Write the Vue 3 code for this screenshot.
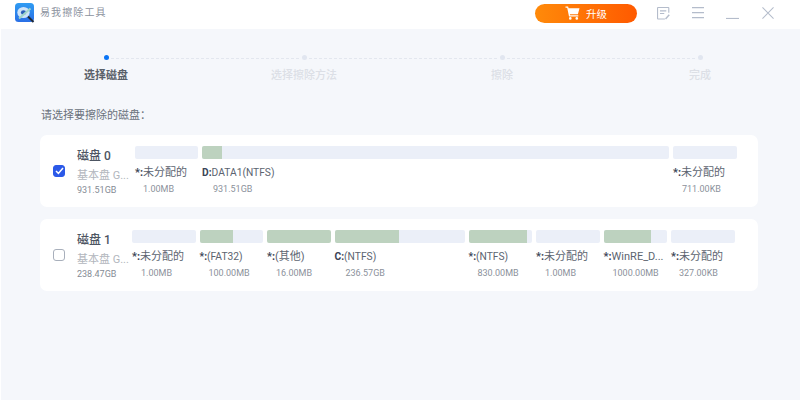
<script setup>
const steps = [
  { label: '选择磁盘', active: true },
  { label: '选择擦除方法' },
  { label: '擦除' },
  { label: '完成' }
]
const disks = [
  {
    name: '磁盘 0', kind: '基本盘 G...', size: '931.51GB', checked: true, indent: 3,
    parts: [
      { w: 63, used: 0, drive: '*:', name: '未分配的', size: '1.00MB', inset: 8 },
      { w: 467, used: 20, drive: 'D:', name: 'DATA1(NTFS)', size: '931.51GB', inset: 11, small: true },
      { w: 64, used: 0, drive: '*:', name: '未分配的', size: '711.00KB', inset: 9 }
    ]
  },
  {
    name: '磁盘 1', kind: '基本盘 G...', size: '238.47GB', checked: false, indent: 0,
    parts: [
      { w: 63.5, used: 0, drive: '*:', name: '未分配的', size: '1.00MB', inset: 9 },
      { w: 63.5, used: 33, drive: '*:', name: '(FAT32)', size: '100.00MB', inset: 9, small: true },
      { w: 63.5, used: 63.5, drive: '*:', name: '(其他)', size: '16.00MB', inset: 9 },
      { w: 130, used: 64, drive: 'C:', name: '(NTFS)', size: '236.57GB', inset: 11, small: true },
      { w: 63.5, used: 58, drive: '*:', name: '(NTFS)', size: '830.00MB', inset: 9, small: true },
      { w: 63.5, used: 0, drive: '*:', name: '未分配的', size: '1.00MB', inset: 9 },
      { w: 63.5, used: 47, drive: '*:', name: 'WinRE_D...', size: '1000.00MB', inset: 9 },
      { w: 63.5, used: 0, drive: '*:', name: '未分配的', size: '327.00KB', inset: 8 }
    ]
  }
]
</script>

<template>
  <div class="app">
    <header class="titlebar">
      <div class="brand">
        <svg class="logo" width="20" height="20" viewBox="0 0 20 20">
          <defs>
            <linearGradient id="lg" x1="0" y1="0" x2="0" y2="1">
              <stop offset="0" stop-color="#2f9cf2" />
              <stop offset="1" stop-color="#2a6fe6" />
            </linearGradient>
          </defs>
          <rect x="0" y="0" width="19" height="19" rx="3.5" fill="url(#lg)" />
          <ellipse cx="8.5" cy="9.5" rx="6.2" ry="5.6" fill="#cfe4f8" />
          <ellipse cx="8.5" cy="9.5" rx="2.6" ry="2.2" fill="#2a5fb8" />
          <path d="M4 15.5 L15.5 5.5" stroke="#9fd6c8" stroke-width="2" />
          <path d="M13 13.5 L18.5 19" stroke="#1f2a3a" stroke-width="2" />
        </svg>
        <span class="appname">易我擦除工具</span>
      </div>
      <div class="actions">
        <button class="upgrade" type="button">
          <svg width="15" height="14" viewBox="0 0 15 14" fill="#fff">
            <path d="M0.5 0.5h2.6l0.5 1.8h10.9l-1.6 6H4.9l0.2 1h8.2v1.2H4L2.2 1.7H0.5z" />
            <circle cx="5.3" cy="12.4" r="1.3" />
            <circle cx="11.8" cy="12.4" r="1.3" />
          </svg>
          <span>升级</span>
        </button>
        <svg class="icon note" width="13" height="13" viewBox="0 0 14 14" fill="none" stroke="#b4bccb" stroke-width="1.2">
          <path d="M8.5 12.9H1.2a.6.6 0 0 1-.6-.6V1.2a.6.6 0 0 1 .6-.6h10.9a.6.6 0 0 1 .6.6v5" />
          <path d="M3.2 4.2h6.8M3.2 7h4.6" />
          <path d="M9.2 12.8l4-4.4" stroke-width="1.6" />
        </svg>
        <svg class="icon menu" width="12" height="12" viewBox="0 0 12 12" stroke="#b4bccb" stroke-width="1.2">
          <path d="M0 .6h12M0 5.6h12M0 10.6h12" />
        </svg>
        <svg class="icon min" width="13" height="12" viewBox="0 0 13 12" stroke="#b4bccb" stroke-width="1.2">
          <path d="M0 11.5h13" />
        </svg>
        <svg class="icon close" width="12" height="12" viewBox="0 0 13 13" stroke="#b4bccb" stroke-width="1.1">
          <path d="M.5.5l12 12M12.5.5l-12 12" />
        </svg>
      </div>
    </header>

    <main class="body">
      <ol class="steps">
        <li v-for="s in steps" :key="s.label" class="step" :class="{ active: s.active }">
          <span class="dot"></span>
          <span class="step-label">{{ s.label }}</span>
        </li>
      </ol>

      <p class="prompt">请选择要擦除的磁盘：</p>

      <section v-for="d in disks" :key="d.name" class="card">
        <span class="check" :class="{ checked: d.checked }">
          <svg v-if="d.checked" width="9" height="8" viewBox="0 0 9 8" fill="none" stroke="#fff" stroke-width="1.5">
            <path d="M1 4l2.4 2.4L8 1" />
          </svg>
        </span>
        <div class="disk-info">
          <div class="disk-name">{{ d.name }}</div>
          <div class="disk-kind">{{ d.kind }}</div>
          <div class="disk-size">{{ d.size }}</div>
        </div>
        <div class="parts" :style="{ paddingLeft: d.indent + 'px' }">
          <div v-for="(p, i) in d.parts" :key="i" class="part" :style="{ width: p.w + 'px' }">
            <div class="bar"><div class="used" :style="{ width: p.used + 'px' }"></div></div>
            <div class="legend">
              <div class="legend-name" :class="{ small: p.small }"><b>{{ p.drive }}</b>{{ p.name }}</div>
              <div class="legend-size" :style="{ paddingLeft: p.inset + 'px' }">{{ p.size }}</div>
            </div>
          </div>
        </div>
      </section>
    </main>
  </div>
</template>

<style>
html, body { margin: 0; background: #f5f7fb; }
</style>

<style scoped>
.app {
  width: 800px;
  height: 400px;
  overflow: hidden;
  background: #f5f7fb;
  font-family: Roboto, "Noto Sans CJK SC", sans-serif;
  display: flex;
  flex-direction: column;
}
.titlebar {
  height: 29px;
  flex: none;
  background: #fff;
  display: flex;
  align-items: center;
  justify-content: space-between;
}
.brand {
  display: flex;
  align-items: center;
  padding: 0 0 3px 15px;
  gap: 5px;
}
.logo { display: block; }
.appname {
  font-size: 10px;
  letter-spacing: 1.1px;
  color: #8c929e;
  line-height: 14px;
}
.actions {
  display: flex;
  align-items: center;
  padding-bottom: 3px;
}
.upgrade {
  width: 102px;
  height: 19px;
  padding: 0;
  border: 0;
  border-radius: 10px;
  background: linear-gradient(90deg, #ff8a0a, #ff5a00);
  color: #fff;
  font: inherit;
  font-size: 10.5px;
  display: flex;
  align-items: center;
  justify-content: center;
  gap: 6px;
  margin-right: 20px;
}
.icon { display: block; flex: none; }
.note { margin-right: 22px; }
.menu { margin-right: 22px; }
.min { margin-right: 23px; }
.close { margin-right: 26px; }

.body {
  flex: 1;
  border-left: 1px solid #fff;
}
.steps {
  list-style: none;
  margin: 0;
  padding: 26px 0 0 6px;
  display: grid;
  grid-template-columns: repeat(4, 198px);
}
.step {
  position: relative;
  display: flex;
  flex-direction: column;
  align-items: center;
  gap: 8px;
}
.step:not(:last-child)::after {
  content: "";
  position: absolute;
  left: calc(50% + 5px);
  width: 188px;
  top: 3px;
  border-top: 1px dashed #e3e7ef;
}
.dot {
  width: 5px;
  height: 5px;
  border-radius: 50%;
  background: #e1e6f0;
}
.active .dot { background: #0a74f5; }
.step-label {
  font-size: 11px;
  line-height: 16px;
  color: #dcdfe6;
  font-weight: 500;
}
.active .step-label { color: #5a6069; font-weight: 700; }
.prompt {
  margin: 24px 0 11px 40px;
  font-size: 11px;
  line-height: 16px;
  color: #6a717c;
}
.card {
  width: 718px;
  height: 72px;
  margin: 0 0 12px 39px;
  box-sizing: border-box;
  background: #fff;
  border-radius: 7px;
  display: flex;
  align-items: flex-start;
  padding-top: 11px;
}
.check {
  flex: none;
  box-sizing: border-box;
  width: 12px;
  height: 12px;
  margin: 19px 0 0 13px;
  border: 1px solid #a8afbb;
  border-radius: 3px;
  background: #fff;
  display: flex;
  align-items: center;
  justify-content: center;
}
.check.checked {
  background: #2b59e8;
  border-color: #2b59e8;
}
.disk-info {
  flex: none;
  width: 55px;
  margin-left: 12px;
}
.disk-name {
  font-size: 12px;
  line-height: 18px;
  margin-top: 1px;
  color: #4d5562;
  font-weight: 500;
  white-space: nowrap;
}
.disk-kind {
  margin-top: 3px;
  font-size: 11px;
  line-height: 15px;
  color: #b2b6bd;
  white-space: nowrap;
}
.disk-size {
  font-size: 9px;
  line-height: 14px;
  margin-top: 0;
  color: #858b95;
  white-space: nowrap;
}
.parts {
  display: flex;
  gap: 4px;
}
.part { flex: none; }
.bar {
  height: 13px;
  border-radius: 2px;
  background: #ebeff8;
  overflow: hidden;
}
.used {
  height: 100%;
  background: #bdd2bf;
}
.legend {
  margin-top: 6px;
  white-space: nowrap;
}
.legend-name {
  font-size: 11px;
  line-height: 16px;
  color: #5c6470;
}
.legend-name.small { font-size: 10.25px; }
.legend-name b {
  color: #3a4456;
  font-weight: 700;
}
.legend-size {
  font-size: 9px;
  line-height: 14px;
  margin-top: 1px;
  color: #8b919b;
}
</style>
